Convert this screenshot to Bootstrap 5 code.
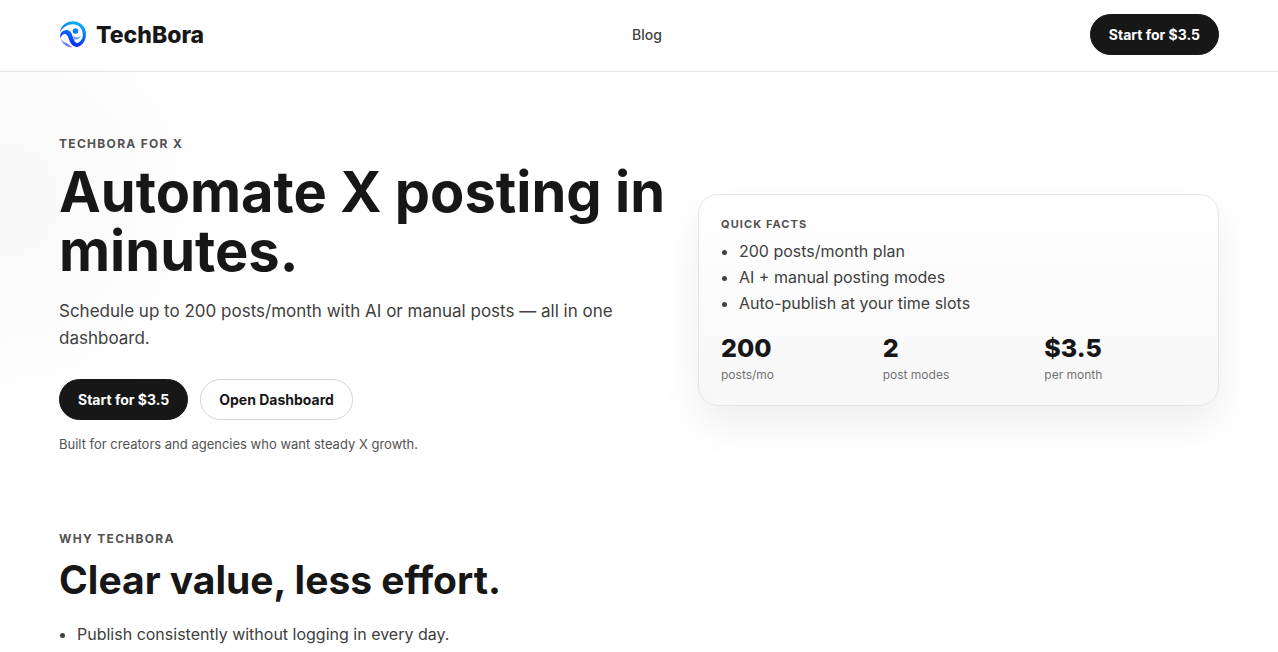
<!DOCTYPE html>
<html lang="en">
<head>
<meta charset="utf-8">
<meta name="viewport" content="width=device-width, initial-scale=1">
<title>TechBora</title>
<link href="https://cdn.jsdelivr.net/npm/bootstrap@5.3.0/dist/css/bootstrap.min.css" rel="stylesheet">
<style>
:root{--ink:#171717;--soft:#404040}
html{scrollbar-width:none}
body{font-family:Inter,sans-serif;font-size:16px;line-height:26px;color:var(--ink);min-height:100vh;
  background:radial-gradient(circle at 0 200px,#f8f8f8 0,transparent 230px),radial-gradient(ellipse 400px 100px at 100% -60px,#f8f8f8 0,transparent 100%),#fff}
.wrap{max-width:1200px;padding-inline:20px}
.site-bar{padding:14px 0 16px;background:rgba(255,255,255,.6);border-bottom:1px solid #e5e5e5}
.brand{font-size:23px;font-weight:800;line-height:30px;gap:9px;color:var(--ink)}
.brand svg{width:28px;height:28px}
.menu-link{font-size:14px;font-weight:500;color:var(--soft)}
.pill{font-size:14px;font-weight:700;line-height:17px;padding:11px 18px;border-radius:999px;border:1px solid var(--ink)}
.pill-dark,.pill-dark:hover{background:var(--ink);color:#fff}
.pill-light,.pill-light:hover{background:#fff;border-color:#d4d4d4;color:var(--ink)}
.hero{display:grid;grid-template-columns:minmax(0,607fr) minmax(0,521fr);gap:32px;align-items:center;padding:64px 0 68px}
.eyebrow{font-size:12px;font-weight:700;letter-spacing:1.3px;line-height:15px;margin-bottom:12px;color:#525252;text-transform:uppercase}
h1{font-size:56px;font-weight:700;line-height:59px;margin-bottom:17px}
.intro{font-size:17px;line-height:27px;margin-bottom:27px;color:var(--soft)}
.actions{gap:12px}
.note{font-size:13px;line-height:21px;margin:14px 0 8px;color:#525252}
.facts{border:1px solid #e5e5e5;border-radius:20px;padding:22px;background:linear-gradient(#fff,#f7f7f7);box-shadow:0 18px 40px rgba(0,0,0,.07)}
.facts .eyebrow{font-size:11px;letter-spacing:1.1px;margin-bottom:6px}
.points{padding-left:18px;color:var(--soft)}
.stats{display:grid;grid-template-columns:repeat(3,1fr);gap:10px}
.stat{font-size:25px;font-weight:800;line-height:32px}
.stat-label{font-size:12px;line-height:16px;margin-top:3px;color:#737373}
h2{font-size:39px;font-weight:700;line-height:44px;margin-bottom:19px}
@media (max-width:900px){.hero{grid-template-columns:1fr}h1{font-size:40px;line-height:44px}}
</style>
</head>
<body>
<header class="site-bar">
  <nav class="container-fluid wrap d-flex justify-content-between align-items-center">
    <a href="#" class="brand d-flex align-items-center text-decoration-none">
      <svg viewBox="0 0 28 28" aria-hidden="true">
        <defs><linearGradient id="sky" gradientUnits="userSpaceOnUse" x1="20" y1="0" x2="10" y2="26"><stop offset="0" stop-color="#00c0ff"/><stop offset=".5" stop-color="#0a68ff"/><stop offset="1" stop-color="#0a18f0"/></linearGradient></defs>
        <g fill="url(#sky)">
          <path d="M1 11C2 4.500 7.500 .3 14 .3C21.500 .3 27 6 27 13C27 19.500 23.500 24.500 18.500 26C13.500 25.500 11.500 22.500 10.200 19C9 15.500 8 13 6 13C4 13 2.500 14.500 1.500 17C.2 13 3 9 7.500 9C12 9 12.800 13 14 16.500C15.500 20.500 16.500 22 18.800 22C22 20.500 24 17 23.800 13C23.500 7.500 19.500 3.300 13.500 3.300C8 3.300 4 6.500 1 11Z"/>
          <path d="M1.500 17C2.500 19.500 4.500 21.200 7 21.800C9 22.500 10.500 25 13.500 26.300C8 26.500 3 23 1.500 17Z" opacity=".6"/>
          <path d="M14 14.500C16 16.800 19.500 17 22 15C20.500 18 17.500 19 15.200 18.500Z" opacity=".6"/>
          <circle cx="16.500" cy="10" r="2.800"/>
        </g>
      </svg>
      <span>TechBora</span>
    </a>
    <a href="#" class="menu-link text-decoration-none">Blog</a>
    <button type="button" class="btn pill pill-dark">Start for $3.5</button>
  </nav>
</header>
<main class="container-fluid wrap">
  <section class="hero">
    <div>
      <p class="eyebrow">TechBora for X</p>
      <h1>Automate X posting in minutes.</h1>
      <p class="intro">Schedule up to 200 posts/month with AI or manual posts — all in one dashboard.</p>
      <div class="d-flex flex-wrap actions">
        <button type="button" class="btn pill pill-dark">Start for $3.5</button>
        <button type="button" class="btn pill pill-light">Open Dashboard</button>
      </div>
      <p class="note">Built for creators and agencies who want steady X growth.</p>
    </div>
    <aside class="facts">
      <p class="eyebrow">Quick facts</p>
      <ul class="points mb-3">
        <li>200 posts/month plan</li>
        <li>AI + manual posting modes</li>
        <li>Auto-publish at your time slots</li>
      </ul>
      <div class="stats">
        <div><div class="stat">200</div><div class="stat-label">posts/mo</div></div>
        <div><div class="stat">2</div><div class="stat-label">post modes</div></div>
        <div><div class="stat">$3.5</div><div class="stat-label">per month</div></div>
      </div>
    </aside>
  </section>
  <section>
    <p class="eyebrow">Why TechBora</p>
    <h2>Clear value, less effort.</h2>
    <ul class="points mb-0">
      <li>Publish consistently without logging in every day.</li>
    </ul>
  </section>
</main>
<script src="https://cdn.jsdelivr.net/npm/bootstrap@5.3.0/dist/js/bootstrap.bundle.min.js"></script>
</body>
</html>
